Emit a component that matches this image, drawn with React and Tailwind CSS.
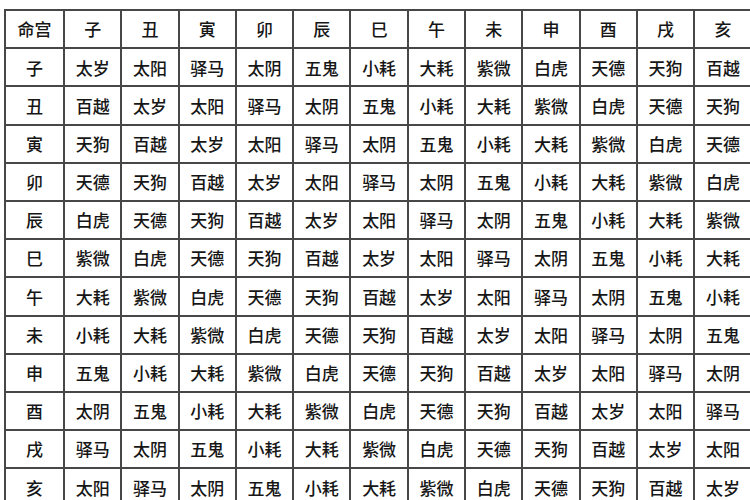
const branches = ["子", "丑", "寅", "卯", "辰", "巳", "午", "未", "申", "酉", "戌", "亥"];
const gods = ["太岁", "太阳", "驿马", "太阴", "五鬼", "小耗", "大耗", "紫微", "白虎", "天德", "天狗", "百越"];

function Cell({ children }) {
    return (
        <div className="flex items-center justify-center border-r-2 border-b-2 border-[#474747] text-[17px] font-medium text-[#161616]">
            {children}
        </div>
    );
}

export default function App() {
    return (
        <main
            className="w-[750px] h-[500px] overflow-hidden bg-white pl-[4px] pt-[9px]"
            style={{ fontFamily: '"Noto Sans CJK SC", "Noto Sans", sans-serif' }}
        >
            <div className="grid w-max grid-cols-[59px_repeat(12,57.3px)] auto-rows-[38.2px] border-l-2 border-t-2 border-[#474747]">
                <Cell>命宫</Cell>
                {branches.map((b) => (
                    <Cell key={b}>{b}</Cell>
                ))}
                {branches.map((row, i) => [
                    <Cell key={row}>{row}</Cell>,
                    ...branches.map((col, j) => (
                        <Cell key={row + col}>{gods[(j - i + 12) % 12]}</Cell>
                    )),
                ])}
            </div>
        </main>
    );
}
